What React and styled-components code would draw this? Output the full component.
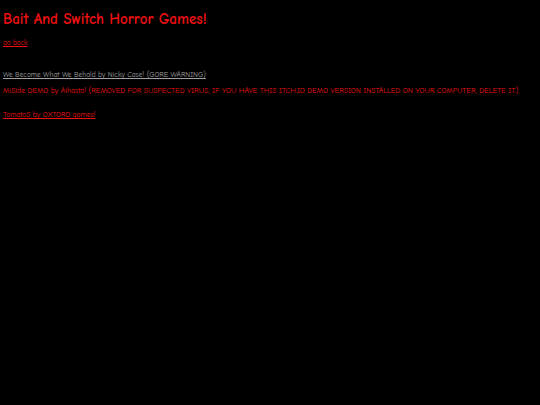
import React from "react";
import styled, { createGlobalStyle } from "styled-components";

const Global = createGlobalStyle`
  html, body { background: #000; }
  body {
    margin: 0;
    font-family: "Comic Sans MS", "Comic Neue", "Open Sans", "DejaVu Sans", sans-serif;
  }
`;

const Page = styled.div`
  padding: 10px 3px;
  display: flex;
  flex-direction: column;
`;

const Title = styled.h1`
  margin: 0;
  font-size: 15px;
  line-height: 18px;
  font-weight: bold;
  color: #ee1111;
`;

const BackLink = styled.a`
  margin-top: 10px;
  font-size: 7.2px;
  line-height: 10px;
  color: #ee1111;
  text-decoration: underline;
  align-self: flex-start;
`;

const List = styled.div`
  margin-top: 22px;
  display: flex;
  flex-direction: column;
  gap: 6px;
`;

const Entry = styled.div`
  font-size: ${(p) => p.$size || 7.5}px;
  line-height: 10px;
  margin-top: ${(p) => p.$gap || 0}px;
  color: ${(p) => (p.$dim ? "#a0a0a0" : "#ee1111")};
  text-decoration: ${(p) => (p.$link ? "underline" : "none")};
  white-space: nowrap;
`;

export default function App() {
  return (
    <>
      <Global />
      <Page>
        <Title>Bait And Switch Horror Games!</Title>
        <BackLink href="#">go back</BackLink>
        <List>
          <Entry $dim $link $size={7.4}>We Become What We Behold by Nicky Case! (GORE WARNING)</Entry>
          <Entry $size={7.65}>
            MiSide DEMO by Aihasto! (REMOVED FOR SUSPECTED VIRUS, IF YOU HAVE THIS ITCH.IO DEMO VERSION INSTALLED ON YOUR COMPUTER, DELETE IT.)
          </Entry>
          <Entry $link $gap={8}>TomatoS by OXTORD games!</Entry>
        </List>
      </Page>
    </>
  );
}
